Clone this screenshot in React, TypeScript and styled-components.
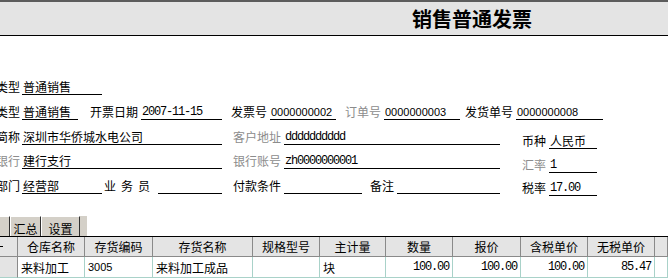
import React from "react";
import styled, { createGlobalStyle } from "styled-components";

const CJK = `"Noto Sans CJK SC", "Liberation Sans", sans-serif`;
const MONO = `"Liberation Mono", "Noto Sans CJK SC", monospace`;
const SANS = `"Liberation Sans", "Noto Sans CJK SC", sans-serif`;

const GlobalStyle = createGlobalStyle`
	html, body {
		margin: 0;
		padding: 0;
		background: #fff;
	}
	body {
		font-family: ${CJK};
		font-size: 12px;
		color: #000;
		overflow: hidden;
	}
`;

const Page = styled.div`
	width: 668px;
	height: 278px;
	overflow: hidden;
	background: #fff;
`;

const TitleBar = styled.header`
	height: 33px;
	border-top: 2px solid #5c5c5c;
	border-bottom: 1px solid #000;
	background: #e4e4e4;
	display: flex;
	align-items: center;
	padding-left: 412px;
`;

const Title = styled.h1`
	margin: 0;
	font-size: 20px;
	line-height: 20px;
	font-weight: 700;
`;

const Form = styled.div`
	margin-left: -4px;
	padding-top: 34px;
	display: flex;
	flex-direction: column;
`;

const Row = styled.div<{ $h: number }>`
	display: flex;
	align-items: flex-end;
	height: ${(p) => p.$h}px;
`;

const Lower = styled.div`
	display: flex;
	align-items: flex-start;
`;

const Column = styled.div<{ $w?: number }>`
	display: flex;
	flex-direction: column;
	width: ${(p) => (p.$w ? `${p.$w}px` : "auto")};
`;

const Field = styled.div<{ $ml?: number }>`
	display: flex;
	align-items: flex-end;
	margin-left: ${(p) => p.$ml ?? 0}px;
`;

const Label = styled.span<{ $w: number; $muted?: boolean; $spaced?: boolean }>`
	box-sizing: border-box;
	width: ${(p) => p.$w}px;
	padding: 0 3px 1px 0;
	text-align: right;
	white-space: nowrap;
	line-height: 14px;
	color: ${(p) => (p.$muted ? "#8c8c8c" : "#000")};
	letter-spacing: ${(p) => (p.$spaced ? "5px" : "0")};
`;

const fonts = {
	cjk: `font-family: ${CJK}; font-size: 12px;`,
	mono: `font-family: ${MONO}; font-size: 12px; letter-spacing: -1.2px;`,
	sans: `font-family: ${SANS}; font-size: 11px;`,
};

type Kind = keyof typeof fonts;

const Value = styled.span<{ $w: number; $kind?: Kind }>`
	box-sizing: border-box;
	width: ${(p) => p.$w}px;
	height: 15px;
	line-height: 14px;
	padding-left: 1px;
	border-bottom: 1px solid #000;
	white-space: nowrap;
	overflow: hidden;
	${(p) => fonts[p.$kind ?? "cjk"]}
`;

const TabBar = styled.div`
	margin-top: 20px;
	width: 87px;
	height: 20px;
	background: #d4d0c8;
	display: flex;
`;

const Tab = styled.div<{ $w: number }>`
	box-sizing: border-box;
	width: ${(p) => p.$w}px;
	height: 20px;
	padding-top: 5px;
	line-height: 14px;
	text-align: center;
	border-top: 1px solid #fff;
	border-left: 1px solid #fff;
	border-right: 1px solid #303030;
`;

const TabStub = styled(Tab)`
	border-left: none;
`;

const Grid = styled.div`
	display: grid;
	grid-template-columns: 18px 67px 68px 100px 67px 66px 67px 68px 67px 67px 1fr;
	border-top: 1px solid #000;
`;

const HeadCell = styled.div`
	box-sizing: border-box;
	height: 20px;
	background: #e4e4e4;
	border-right: 1px solid #8a8a8a;
	border-bottom: 1px solid #8a8a8a;
	display: flex;
	align-items: center;
	justify-content: center;
	white-space: nowrap;
	overflow: hidden;
`;

const Dash = styled.span`
	width: 3px;
	height: 1px;
	background: #000;
	margin-right: auto;
`;

const Cell = styled.div<{ $align?: "left" | "right"; $kind?: Kind; $stub?: boolean }>`
	box-sizing: border-box;
	height: 21px;
	padding: 0 3px;
	background: ${(p) => (p.$stub ? "#e4e4e4" : "#fff")};
	border-right: 1px solid ${(p) => (p.$stub ? "#8a8a8a" : "#a9d2c9")};
	border-bottom: 1px solid #a9d2c9;
	display: flex;
	align-items: center;
	justify-content: ${(p) => (p.$align === "right" ? "flex-end" : "flex-start")};
	white-space: nowrap;
	overflow: hidden;
	${(p) => fonts[p.$kind ?? "cjk"]}
`;

const headers = ["", "仓库名称", "存货编码", "存货名称", "规格型号", "主计量", "数量", "报价", "含税单价", "无税单价", ""];

const row: { text: string; align?: "left" | "right"; kind?: Kind }[] = [
	{ text: "来料加工" },
	{ text: "3005", kind: "sans" },
	{ text: "来料加工成品" },
	{ text: "" },
	{ text: "块" },
	{ text: "100.00", align: "right", kind: "mono" },
	{ text: "100.00", align: "right", kind: "mono" },
	{ text: "100.00", align: "right", kind: "mono" },
	{ text: "85.47", align: "right", kind: "mono" },
	{ text: "" },
];

export default function App() {
	return (
		<Page>
			<GlobalStyle />
			<TitleBar>
				<Title>销售普通发票</Title>
			</TitleBar>
			<Form>
				<Row $h={25}>
					<Field>
						<Label $w={26}>类型</Label>
						<Value $w={80}>普通销售</Value>
					</Field>
				</Row>
				<Row $h={25}>
					<Field>
						<Label $w={26}>类型</Label>
						<Value $w={56}>普通销售</Value>
					</Field>
					<Field $ml={10}>
						<Label $w={53}>开票日期</Label>
						<Value $w={81} $kind="mono">2007-11-15</Value>
					</Field>
					<Field $ml={7}>
						<Label $w={41}>发票号</Label>
						<Value $w={66} $kind="sans">0000000002</Value>
					</Field>
					<Field $ml={7}>
						<Label $w={41} $muted>订单号</Label>
						<Value $w={76} $kind="sans">0000000003</Value>
					</Field>
					<Field $ml={3}>
						<Label $w={53}>发货单号</Label>
						<Value $w={87} $kind="sans">0000000008</Value>
					</Field>
				</Row>
				<Lower>
					<Column $w={504}>
						<Row $h={25}>
							<Field>
								<Label $w={26}>简称</Label>
								<Value $w={200}>深圳市华侨城水电公司</Value>
							</Field>
							<Field $ml={7}>
								<Label $w={55} $muted>客户地址</Label>
								<Value $w={216} $kind="mono">dddddddddd</Value>
							</Field>
						</Row>
						<Row $h={24}>
							<Field>
								<Label $w={26} $muted>银行</Label>
								<Value $w={200}>建行支行</Value>
							</Field>
							<Field $ml={7}>
								<Label $w={55} $muted>银行账号</Label>
								<Value $w={216} $kind="mono">zh0000000001</Value>
							</Field>
						</Row>
						<Row $h={25}>
							<Field>
								<Label $w={26}>部门</Label>
								<Value $w={80}>经营部</Value>
							</Field>
							<Field>
								<Label $w={56} $spaced>业务员</Label>
								<Value $w={64} />
							</Field>
							<Field $ml={7}>
								<Label $w={55}>付款条件</Label>
								<Value $w={78} />
							</Field>
							<Field>
								<Label $w={35}>备注</Label>
								<Value $w={103} />
							</Field>
						</Row>
					</Column>
					<Column>
						<Row $h={29}>
							<Field>
								<Label $w={49}>币种</Label>
								<Value $w={48}>人民币</Value>
							</Field>
						</Row>
						<Row $h={24}>
							<Field>
								<Label $w={49} $muted>汇率</Label>
								<Value $w={48} $kind="mono">1</Value>
							</Field>
						</Row>
						<Row $h={23}>
							<Field>
								<Label $w={49}>税率</Label>
								<Value $w={48} $kind="mono">17.00</Value>
							</Field>
						</Row>
					</Column>
				</Lower>
			</Form>
			<TabBar>
				<TabStub $w={10} />
				<Tab $w={31}>汇总</Tab>
				<Tab $w={39}>设置</Tab>
			</TabBar>
			<Grid>
				{headers.map((h, i) => (
					<HeadCell key={`h${i}`}>{i === 0 ? <Dash /> : h}</HeadCell>
				))}
				<Cell $stub />
				{row.map((c, i) => (
					<Cell key={`c${i}`} $align={c.align} $kind={c.kind}>
						{c.text}
					</Cell>
				))}
			</Grid>
		</Page>
	);
}
